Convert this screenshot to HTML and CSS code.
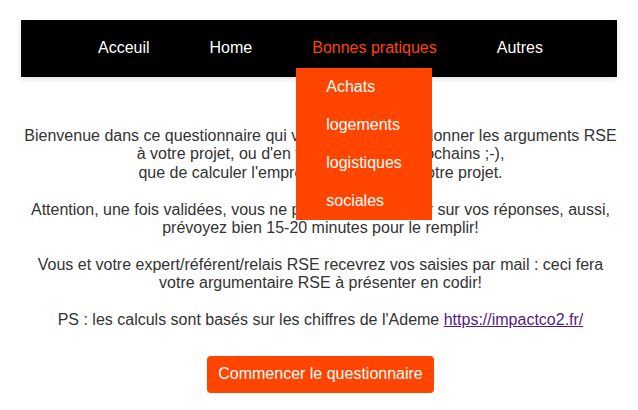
FILE: index.html
```html
<!DOCTYPE html>
<html lang="fr">
<head>
<meta charset="utf-8">
<title>Questionnaire RSE</title>
<link rel="stylesheet" href="styles.css">
</head>
<body>
<div class="page">
  <nav class="nav">
    <ul class="menu">
      <li class="menu-item"><a class="menu-link" href="#">Acceuil</a></li>
      <li class="menu-item"><a class="menu-link" href="#">Home</a></li>
      <li class="menu-item menu-item-open"><a class="menu-link menu-link-active" href="#">Bonnes pratiques</a>
        <ul class="dropdown">
          <li><a class="dropdown-link" href="#">Achats</a></li>
          <li><a class="dropdown-link" href="#">logements</a></li>
          <li><a class="dropdown-link" href="#">logistiques</a></li>
          <li><a class="dropdown-link" href="#">sociales</a></li>
        </ul>
      </li>
      <li class="menu-item"><a class="menu-link" href="#">Autres</a></li>
    </ul>
  </nav>
  <main class="content">
    <p class="intro">Bienvenue dans ce questionnaire qui vous permettra de donner les arguments RSE<br>à votre projet, ou d'en trouver pour les prochains ;-),<br>que de calculer l'empreinte carbone de votre projet.<br><br>Attention, une fois validées, vous ne pourrez plus revenir sur vos réponses, aussi,<br>prévoyez bien 15-20 minutes pour le remplir!<br><br>Vous et votre expert/référent/relais RSE recevrez vos saisies par mail : ceci fera<br>votre argumentaire RSE à présenter en codir!<br><br>PS : les calculs sont basés sur les chiffres de l'Ademe <a class="link" href="#">https://impactco2.fr/</a></p>
    <button class="start" type="button">Commencer le questionnaire</button>
  </main>
</div>
</body>
</html>
```
FILE: styles.css
```css
html, body {
  margin: 0;
  padding: 0;
  background: #ffffff;
}
body {
  font-family: "Liberation Sans", Arial, sans-serif;
  font-size: 16px;
  color: #333333;
}
.page {
  padding: 20px 21px;
}
.nav {
  background: #000000;
  box-shadow: 0 2px 6px rgba(0, 0, 0, 0.12);
  position: relative;
  z-index: 2;
}
.menu {
  list-style: none;
  margin: 0;
  padding: 0 0 0 3px;
  display: flex;
  justify-content: center;
  gap: 28px;
}
.menu-item {
  position: relative;
}
.menu-link {
  display: block;
  padding: 19px 16px 20px;
  line-height: 18px;
  color: #ffffff;
  text-decoration: none;
}
.menu-link-active {
  color: #ff4500;
}
.dropdown {
  list-style: none;
  margin: 0;
  padding: 0;
  position: absolute;
  top: 48px;
  left: 0;
  width: 136px;
  background: #ff4500;
}
.dropdown-link {
  display: block;
  padding: 10px 30px;
  line-height: 18px;
  color: #ffffff;
  text-decoration: none;
  white-space: nowrap;
}
.content {
  display: flex;
  flex-direction: column;
  align-items: center;
  padding: 50px 0 0 3px;
}
.intro {
  margin: 0;
  text-align: center;
  line-height: 18.4px;
}
.link {
  color: #551a8b;
}
.start {
  margin-top: 27px;
  font-family: "Liberation Sans", Arial, sans-serif;
  font-size: 16px;
  line-height: 18px;
  color: #ffffff;
  background: #ff4500;
  border: none;
  border-radius: 4px;
  padding: 9px 11px 10px;
}
```
